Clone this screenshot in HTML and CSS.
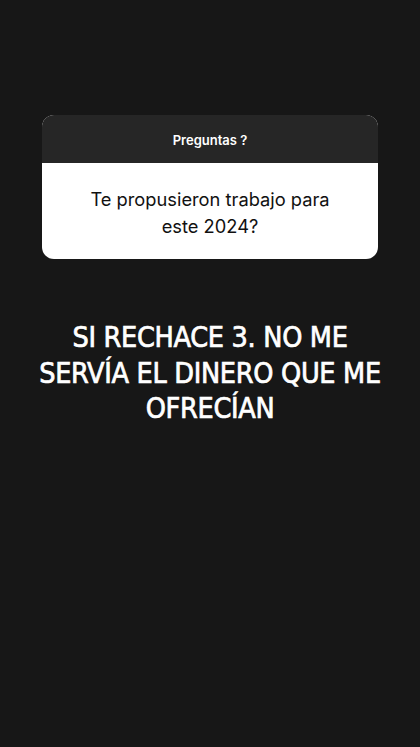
FILE: index.html
```html
<!DOCTYPE html>
<html lang="es">
<head>
    <meta charset="UTF-8">
    <meta name="viewport" content="width=device-width, initial-scale=1.0">
    <title>Preguntas</title>
    <link rel="stylesheet" href="styles.css">
</head>
<body>
    <div class="story">
        <div class="question-card">
            <div class="question-header">Preguntas ?</div>
            <div class="question-body">Te propusieron trabajo para este 2024?</div>
        </div>
        <p class="answer">SI RECHACE 3. NO ME SERVÍA EL DINERO QUE ME OFRECÍAN</p>
    </div>
</body>
</html>
```

FILE: styles.css
```css
body {
    margin: 0;
    background: #171717;
    font-family: Inter, Roboto, sans-serif;
    height: 747px;
    overflow: hidden;
}
.story {
    display: flex;
    flex-direction: column;
    align-items: center;
    padding-top: 115px;
}
.question-card {
    width: 336px;
    border-radius: 12px;
    overflow: hidden;
    background: #fff;
}
.question-header {
    background: #262626;
    color: #fff;
    font-size: 13px;
    font-weight: 600;
    text-align: center;
    height: 48px;
    line-height: 50px;
}
.question-body {
    color: #111;
    font-size: 18.3px;
    line-height: 27px;
    text-align: center;
    padding: 23px 40px 19px;
}
.answer {
    margin: 61px 0 0;
    color: #fff;
    font-family: "DejaVu Sans Condensed", "DejaVu Sans", sans-serif;
    font-size: 28.5px;
    letter-spacing: -0.3px;
    -webkit-text-stroke: 0.7px #fff;
    line-height: 35.5px;
    text-align: center;
    width: 352px;
}
```
